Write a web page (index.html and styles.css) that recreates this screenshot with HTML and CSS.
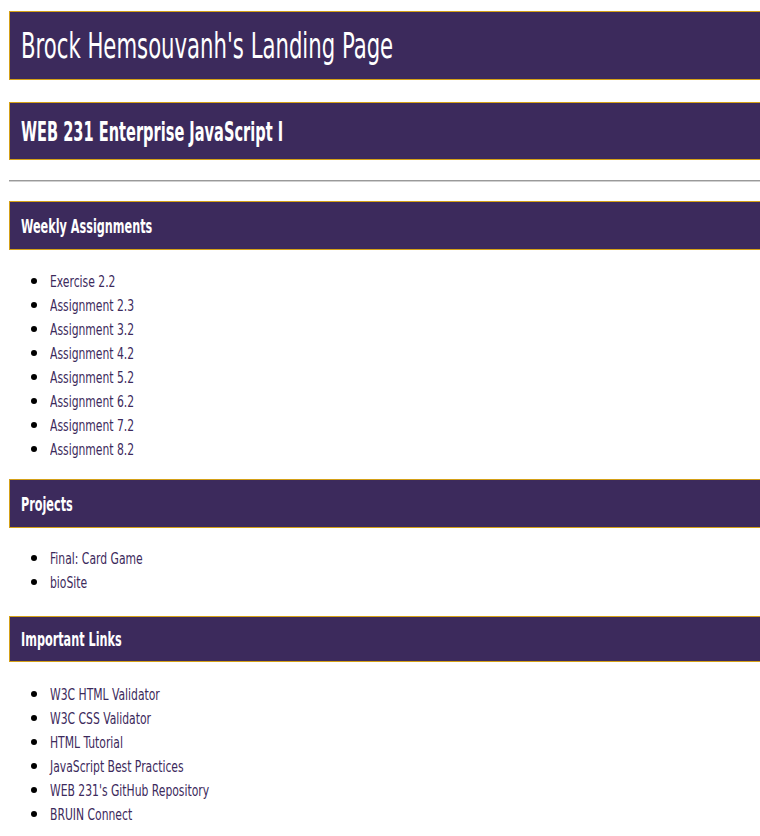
FILE: index.html
```html
<!DOCTYPE html>
<html lang="en">
<head>
<meta charset="utf-8">
<title>Brock Hemsouvanh's Landing Page</title>
<link rel="stylesheet" href="styles.css">
</head>
<body>
<div class="page">
  <header class="band band-title">
    <h1 class="squeeze">Brock Hemsouvanh's Landing Page</h1>
  </header>
  <div class="band band-course">
    <h2 class="squeeze">WEB 231 Enterprise JavaScript I</h2>
  </div>
  <hr class="rule">
  <section>
    <div class="band band-section"><h3 class="squeeze">Weekly Assignments</h3></div>
    <ul class="links">
      <li><a href="#">Exercise 2.2</a></li>
      <li><a href="#">Assignment 2.3</a></li>
      <li><a href="#">Assignment 3.2</a></li>
      <li><a href="#">Assignment 4.2</a></li>
      <li><a href="#">Assignment 5.2</a></li>
      <li><a href="#">Assignment 6.2</a></li>
      <li><a href="#">Assignment 7.2</a></li>
      <li><a href="#">Assignment 8.2</a></li>
    </ul>
  </section>
  <section>
    <div class="band band-section"><h3 class="squeeze">Projects</h3></div>
    <ul class="links links-projects">
      <li><a href="#">Final: Card Game</a></li>
      <li><a href="#">bioSite</a></li>
    </ul>
  </section>
  <section>
    <div class="band band-section band-small"><h3 class="squeeze">Important Links</h3></div>
    <ul class="links links-important">
      <li><a href="#">W3C HTML Validator</a></li>
      <li><a href="#">W3C CSS Validator</a></li>
      <li><a href="#">HTML Tutorial</a></li>
      <li><a href="#">JavaScript Best Practices</a></li>
      <li><a href="#">WEB 231's GitHub Repository</a></li>
      <li><a href="#">BRUIN Connect</a></li>
    </ul>
  </section>
</div>
</body>
</html>
```

FILE: styles.css
```css
html, body {
  margin: 0;
  padding: 0;
  background: #ffffff;
}

body {
  font-family: "DejaVu Sans Condensed", "DejaVu Sans", sans-serif;
  font-stretch: condensed;
  color: #000;
}

.page {
  padding: 11px 0 0 9px;
}

.band {
  background: #3c2a5c;
  border: 1px solid #d4a017;
  border-right: none;
  color: #ffffff;
  display: flex;
  align-items: center;
  padding-left: 11px;
}

.band h1, .band h2, .band h3 {
  margin: 0;
}

.squeeze {
  display: inline-block;
  transform-origin: left center;
  white-space: nowrap;
}

.band-title {
  height: 67px;
}

.band-title h1 {
  font-size: 36px;
  font-weight: 400;
  transform: scaleX(0.655);
}

.band-course {
  margin-top: 22px;
  height: 56px;
}

.band-course h2 {
  font-size: 27px;
  font-weight: 700;
  transform: scaleX(0.6);
}

.rule {
  margin: 20px 0 0 0;
  border: none;
  border-top: 1px solid #9a9a9a;
  border-bottom: 1px solid #d0d0d0;
  height: 0;
}

.band-section {
  margin-top: 19px;
  height: 47px;
}

.band-small {
  height: 44px;
}

.band-section h3 {
  font-size: 20px;
  font-weight: 700;
  transform: scaleX(0.625);
}

section + section .band-section {
  margin-top: 0;
}

.links {
  margin: 18px 0 19px 0;
  padding-left: 41px;
  list-style: disc;
}

.links-projects {
  margin: 17px 0 23px 0;
}

.links-important {
  margin-top: 19px;
}

.links li {
  font-size: 16px;
  line-height: 24px;
  height: 24px;
}

.links li::marker {
  font-size: 19px;
}

.links a {
  display: inline-block;
  color: #3c2a5c;
  text-decoration: none;
  transform: scaleX(0.75);
  transform-origin: left center;
  white-space: nowrap;
}
```
